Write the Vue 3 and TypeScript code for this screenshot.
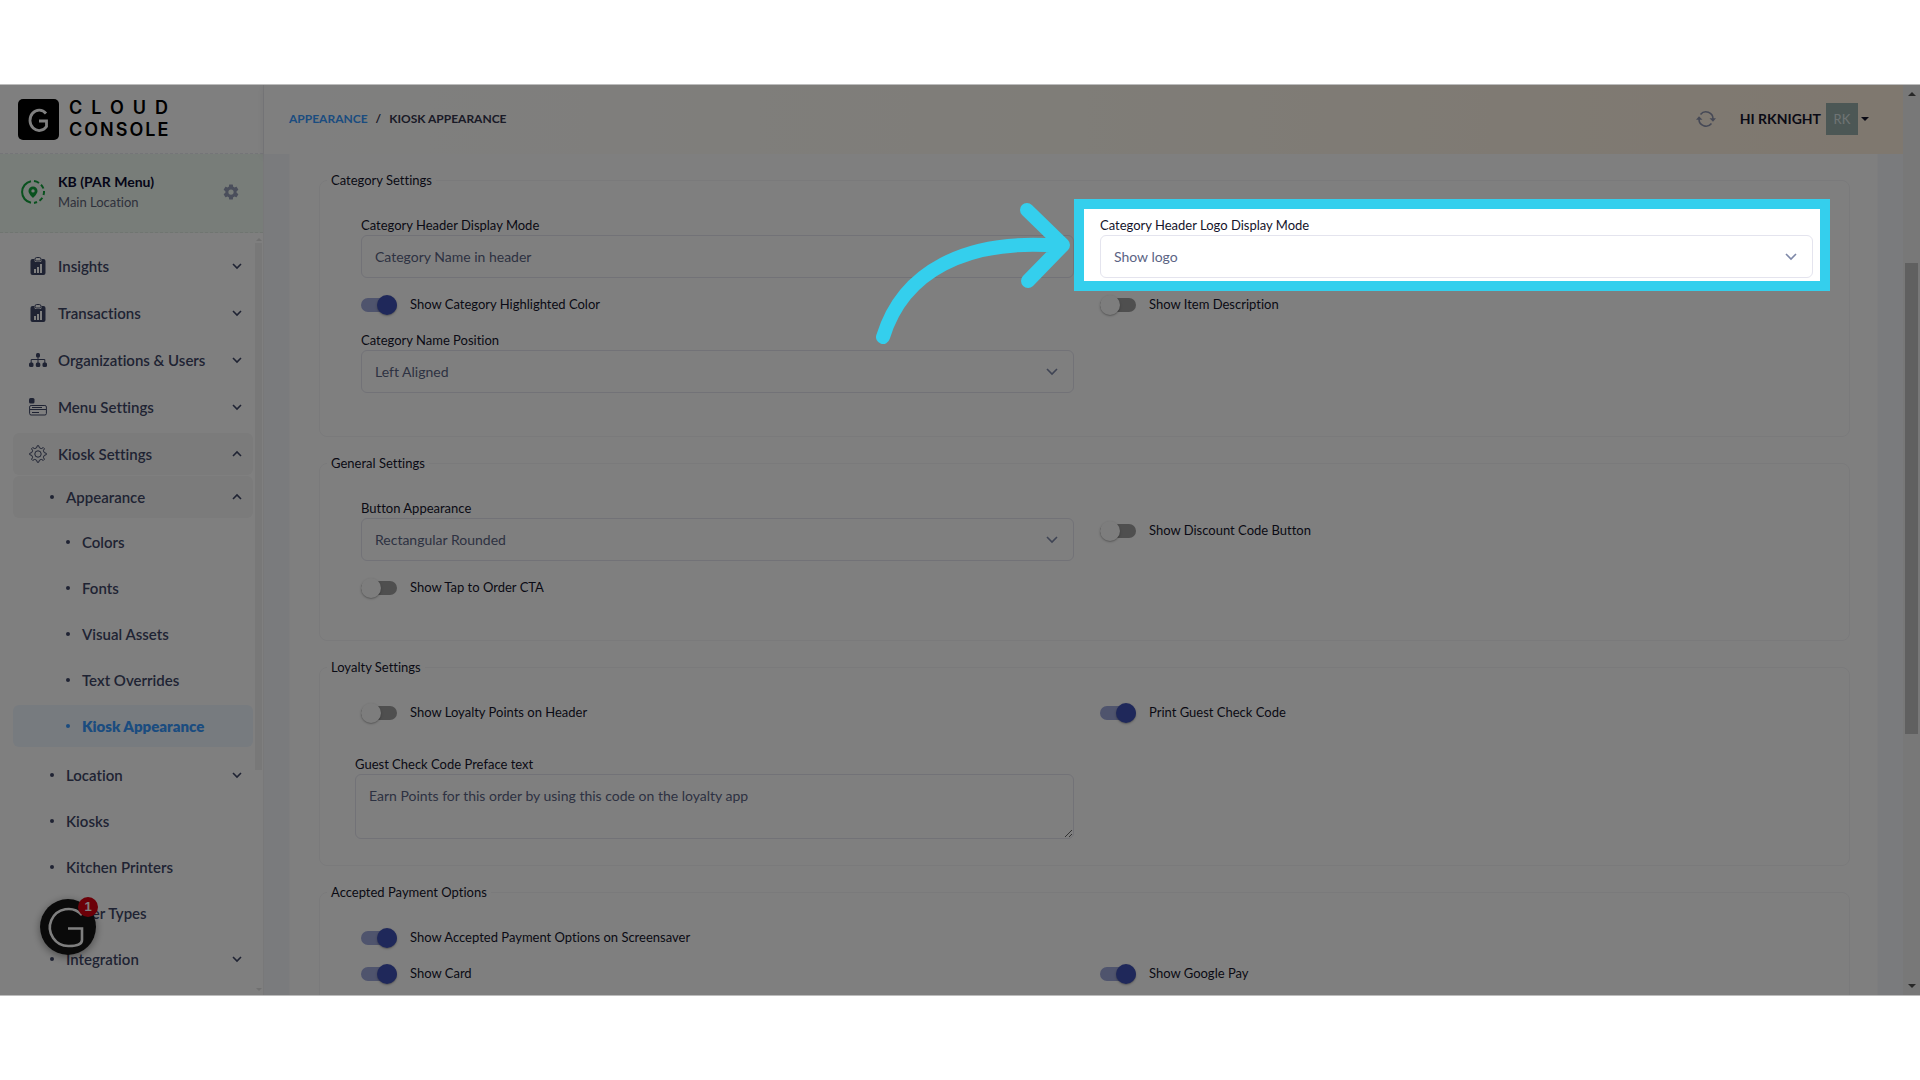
<script setup lang="ts">
import { ref } from 'vue'

interface NavItem {
  label: string
  icon?: string
  chevron?: 'up' | 'down'
  active?: boolean
  open?: boolean
  children?: NavItem[]
}

const nav: NavItem[] = [
  { label: 'Insights', icon: 'report', chevron: 'down' },
  { label: 'Transactions', icon: 'report', chevron: 'down' },
  { label: 'Organizations & Users', icon: 'org', chevron: 'down' },
  { label: 'Menu Settings', icon: 'menu', chevron: 'down' },
  {
    label: 'Kiosk Settings',
    icon: 'gear',
    chevron: 'up',
    open: true,
    children: [
      {
        label: 'Appearance',
        chevron: 'up',
        open: true,
        children: [
          { label: 'Colors' },
          { label: 'Fonts' },
          { label: 'Visual Assets' },
          { label: 'Text Overrides' },
          { label: 'Kiosk Appearance', active: true },
        ],
      },
      { label: 'Location', chevron: 'down' },
      { label: 'Kiosks' },
      { label: 'Kitchen Printers' },
      { label: 'Order Types' },
      { label: 'Integration', chevron: 'down' },
    ],
  },
]

const chevronPath = { down: 'M1 2l4 4 4-4', up: 'M1 6l4-4 4 4' }

const highlightedColor = ref(true)
const itemDescription = ref(false)
const discountCode = ref(false)
const tapToOrder = ref(false)
const loyaltyPoints = ref(false)
const guestCheckCode = ref(true)
const paymentScreensaver = ref(true)
const showCard = ref(true)
const googlePay = ref(true)
const preface = ref('Earn Points for this order by using this code on the loyalty app')
</script>

<template>
  <div class="stage">
    <div class="frame">
      <aside class="sidebar">
        <a class="brand" href="#">
          <svg class="brand-mark" viewBox="0 0 41 41" aria-hidden="true">
            <rect width="41" height="41" rx="5" fill="#000" />
            <path d="M28 14.500A9.200 10.200 0 1 0 28.500 27.500V22H21" fill="none" stroke="#fff" stroke-width="2.800" />
          </svg>
          <span class="brand-name">
            <span class="brand-cloud">CLOUD</span>
            <span class="brand-console">CONSOLE</span>
          </span>
        </a>

        <div class="place">
          <svg class="place-icon" viewBox="0 0 24 24" fill="none" stroke="#12a23c" stroke-width="2" aria-hidden="true">
            <path d="M10 1.200A11 11 0 0 0 10 22.800" />
            <path d="M13 1.100A11 11 0 0 1 18 3M20 4.800A11 11 0 0 1 22.400 8.500M23 11A11 11 0 0 1 22.500 15M21.300 17.800A11 11 0 0 1 18.500 20.800M16 22A11 11 0 0 1 13 22.900" />
            <path d="M12 6.500a4.500 4.500 0 0 0-4.500 4.500c0 3 4.500 7 4.500 7s4.500-4 4.500-7A4.500 4.500 0 0 0 12 6.500zm0 2.700a1.700 1.700 0 1 1 0 3.400 1.700 1.700 0 0 1 0-3.400z" fill="#12a23c" stroke="none" />
          </svg>
          <div class="place-text">
            <strong>KB (PAR Menu)</strong>
            <span>Main Location</span>
          </div>
          <button class="plain" type="button" aria-label="Location settings">
            <svg width="18" height="18" viewBox="0 0 24 24" fill="#959cb6" aria-hidden="true">
              <path d="M19.430 12.980c.04-.32.07-.64.07-.98s-.03-.66-.07-.98l2.110-1.650c.19-.15.24-.42.12-.64l-2-3.460c-.12-.22-.39-.3-.61-.22l-2.490 1c-.52-.4-1.080-.73-1.690-.98l-.38-2.650A.49.49 0 0 0 14 2h-4c-.25 0-.46.18-.49.42l-.38 2.650c-.61.25-1.170.59-1.690.98l-2.490-1c-.23-.09-.49 0-.61.22l-2 3.460c-.13.22-.07.49.12.64l2.110 1.650c-.04.32-.07.65-.07.98s.03.66.07.98l-2.110 1.650c-.19.15-.24.42-.12.64l2 3.460c.12.22.39.3.61.22l2.490-1c.52.4 1.080.73 1.690.98l.38 2.650c.03.24.24.42.49.42h4c.25 0 .46-.18.49-.42l.38-2.650c.61-.25 1.170-.59 1.690-.98l2.490 1c.23.09.49 0 .61-.22l2-3.460c.12-.22.07-.49-.12-.64zM12 15.500a3.500 3.500 0 1 1 0-7 3.500 3.500 0 0 1 0 7z" />
            </svg>
          </button>
        </div>

        <div class="nav-wrap">
          <nav class="nav" aria-label="Main">
            <ul class="level-1">
              <li v-for="top in nav" :key="top.label">
                <a href="#" class="item" :class="{ open: top.open }">
                  <svg v-if="top.icon === 'report'" class="icon" viewBox="0 0 18 18" aria-hidden="true">
                    <path d="M3.500 2h2v1.500A1.500 1.500 0 0 0 7 5h4a1.500 1.500 0 0 0 1.500-1.500V2h2A2 2 0 0 1 16.500 4v12a2 2 0 0 1-2 2h-11a2 2 0 0 1-2-2V4a2 2 0 0 1 2-2z" fill="#3f4767" />
                    <rect x="6" y="0.500" width="6" height="3.500" rx="1.700" fill="none" stroke="#3f4767" />
                    <path d="M5 12h2v4H5zM8 10h2v6H8zM11 7h2v9h-2z" fill="#fff" />
                  </svg>
                  <svg v-else-if="top.icon === 'org'" class="icon" viewBox="0 0 18 18" fill="#3f4767" aria-hidden="true">
                    <rect x="7" y="2" width="4" height="4.500" rx="1.500" />
                    <rect x="0" y="11.500" width="4.500" height="4.500" rx="1.500" />
                    <rect x="6.800" y="11.500" width="4.500" height="4.500" rx="1.500" />
                    <rect x="13.500" y="11.500" width="4.500" height="4.500" rx="1.500" />
                    <path d="M2.200 12V8.500h13.600V12M9 6v6" fill="none" stroke="#3f4767" />
                  </svg>
                  <svg v-else-if="top.icon === 'menu'" class="icon" viewBox="0 0 18 18" fill="none" stroke="#3f4767" aria-hidden="true">
                    <rect x="0" y="0" width="5.500" height="5.500" rx="1.500" fill="#3f4767" stroke="none" />
                    <rect x="0.600" y="7.500" width="16.800" height="9.500" rx="1.500" />
                    <path d="M1 11.500h16M3 9.500h10M3 14.500h7" />
                  </svg>
                  <svg v-else class="icon" viewBox="0 0 18 18" fill="none" stroke="#3f4767" stroke-linejoin="round" aria-hidden="true">
                    <circle cx="9" cy="9" r="3.200" />
                    <path d="M7.600 2.800L8.300.7h1.400l.7 2.100 1.900.8 2-1 1.100 1.100-1 2 .8 1.900 2.100.7v1.400l-2.100.7-.8 1.900 1 2-1.100 1.100-2-1-1.900.8-.7 2.100H8.300l-.7-2.100-1.900-.8-2 1-1.100-1.100 1-2-.8-1.900L.7 9.700V8.300l2.100-.7.8-1.900-1-2 1.100-1.100 2 1z" />
                  </svg>
                  <span class="label">{{ top.label }}</span>
                  <svg v-if="top.chevron" class="chev" viewBox="0 0 10 8" aria-hidden="true"><path :d="chevronPath[top.chevron]" /></svg>
                </a>
                <ul v-if="top.children" class="level-2">
                  <li v-for="mid in top.children" :key="mid.label">
                    <a href="#" class="item" :class="{ open: mid.open }">
                      <i class="dot"></i>
                      <span class="label">{{ mid.label }}</span>
                      <svg v-if="mid.chevron" class="chev" viewBox="0 0 10 8" aria-hidden="true"><path :d="chevronPath[mid.chevron]" /></svg>
                    </a>
                    <ul v-if="mid.children" class="level-3">
                      <li v-for="leaf in mid.children" :key="leaf.label">
                        <a href="#" class="item" :class="{ active: leaf.active }">
                          <i class="dot"></i>
                          <span class="label">{{ leaf.label }}</span>
                        </a>
                      </li>
                    </ul>
                  </li>
                </ul>
              </li>
            </ul>
          </nav>
          <div class="mini-scroll" aria-hidden="true">
            <i class="tri up"></i>
            <i class="mini-thumb"></i>
            <i class="mini-rest"></i>
            <i class="tri down"></i>
          </div>
        </div>
      </aside>

      <div class="main">
        <header class="topbar">
          <nav class="crumbs" aria-label="Breadcrumb">
            <a href="#">APPEARANCE</a>
            <span>/</span>
            <span>KIOSK APPEARANCE</span>
          </nav>
          <div class="account">
            <button class="plain" type="button" aria-label="Refresh">
              <svg width="20" height="18" viewBox="0 0 20 18" fill="none" stroke="#8d93ad" stroke-width="1.600" aria-hidden="true">
                <path d="M4.500 4.500A7 7 0 0 1 17 9M15.500 13.500A7 7 0 0 1 3 9" />
                <path d="M13.500 8.300H20L17 11.700zM0 9.700h6.500L3 6.300z" fill="#8d93ad" stroke="none" />
              </svg>
            </button>
            <button class="plain user" type="button">
              <span class="hello">HI RKNIGHT</span>
              <span class="avatar">RK</span>
              <i class="caret"></i>
            </button>
          </div>
        </header>

        <main class="content">
          <form class="card" @submit.prevent>
            <fieldset>
              <legend>Category Settings</legend>
              <div class="grid">
                <div class="field">
                  <label for="header-mode">Category Header Display Mode</label>
                  <div class="select">
                    <select id="header-mode"><option>Category Name in header</option></select>
                    <svg viewBox="0 0 12 8" aria-hidden="true"><path d="M1 1l5 5 5-5" /></svg>
                  </div>
                </div>
                <div class="field">
                  <label for="logo-mode">Category Header Logo Display Mode</label>
                  <div class="select">
                    <select id="logo-mode"><option>Show logo</option></select>
                    <svg viewBox="0 0 12 8" aria-hidden="true"><path d="M1 1l5 5 5-5" /></svg>
                  </div>
                  <div class="spotlight" aria-hidden="true"></div>
                  <svg class="arrow" viewBox="0 0 200 150" aria-hidden="true">
                    <path d="M13 137C33 72 95 38 190 46M157 10l36 35-35 36" />
                  </svg>
                </div>
                <label class="toggle"><input v-model="highlightedColor" type="checkbox" />Show Category Highlighted Color</label>
                <label class="toggle"><input v-model="itemDescription" type="checkbox" />Show Item Description</label>
                <div class="field">
                  <label for="name-position">Category Name Position</label>
                  <div class="select">
                    <select id="name-position"><option>Left Aligned</option></select>
                    <svg viewBox="0 0 12 8" aria-hidden="true"><path d="M1 1l5 5 5-5" /></svg>
                  </div>
                </div>
              </div>
            </fieldset>

            <fieldset>
              <legend>General Settings</legend>
              <div class="grid">
                <div class="field">
                  <label for="button-look">Button Appearance</label>
                  <div class="select">
                    <select id="button-look"><option>Rectangular Rounded</option></select>
                    <svg viewBox="0 0 12 8" aria-hidden="true"><path d="M1 1l5 5 5-5" /></svg>
                  </div>
                </div>
                <label class="toggle"><input v-model="discountCode" type="checkbox" />Show Discount Code Button</label>
                <label class="toggle"><input v-model="tapToOrder" type="checkbox" />Show Tap to Order CTA</label>
              </div>
            </fieldset>

            <fieldset class="loyalty">
              <legend>Loyalty Settings</legend>
              <div class="grid">
                <label class="toggle"><input v-model="loyaltyPoints" type="checkbox" />Show Loyalty Points on Header</label>
                <label class="toggle"><input v-model="guestCheckCode" type="checkbox" />Print Guest Check Code</label>
                <div class="field preface">
                  <label for="preface">Guest Check Code Preface text</label>
                  <textarea id="preface" v-model="preface"></textarea>
                </div>
              </div>
            </fieldset>

            <fieldset>
              <legend>Accepted Payment Options</legend>
              <div class="grid">
                <label class="toggle full"><input v-model="paymentScreensaver" type="checkbox" />Show Accepted Payment Options on Screensaver</label>
                <label class="toggle"><input v-model="showCard" type="checkbox" />Show Card</label>
                <label class="toggle"><input v-model="googlePay" type="checkbox" />Show Google Pay</label>
              </div>
            </fieldset>
          </form>
        </main>
      </div>

      <div class="scrollbar" aria-hidden="true">
        <i class="tri up"></i>
        <i class="before"></i>
        <i class="thumb"></i>
        <i class="after"></i>
        <i class="tri down"></i>
      </div>

      <button class="plain helper" type="button" aria-label="Open help, 1 unread">
        <svg viewBox="0 0 56 56" aria-hidden="true">
          <circle cx="28" cy="28" r="28" fill="#141414" />
          <path d="M42 16A18.500 18.500 0 1 0 29 47C36 47 42 46 42 41V29.500H28" fill="none" stroke="#fff" stroke-width="2.600" />
        </svg>
        <span class="badge">1</span>
      </button>
    </div>
  </div>
</template>

<style>
body {
  margin: 0;
  background: #fff;
}
</style>

<style scoped>
* {
  box-sizing: border-box;
}
.stage {
  display: flex;
  height: 100vh;
  padding: 84px 0;
  font-family: Lato, "Liberation Sans", sans-serif;
  font-size: 13px;
  font-variant-ligatures: none;
  line-height: 20px;
  color: #14142b;
}
.frame {
  position: relative;
  flex: 1;
  display: flex;
  overflow: hidden;
  border-top: 1px solid #bdbdbd;
  border-bottom: 1px solid #bdbdbd;
}
ul {
  list-style: none;
  margin: 0;
  padding: 0;
}
a {
  color: inherit;
  text-decoration: none;
}
.plain {
  border: 0;
  padding: 0;
  background: none;
  font: inherit;
  color: inherit;
  display: flex;
  align-items: center;
}

/* Sidebar */
.sidebar {
  flex: none;
  width: 264px;
  display: flex;
  flex-direction: column;
  border-right: 1px solid #f0f0f3;
  background: #fff;
}
.brand {
  display: flex;
  align-items: center;
  gap: 10px;
  height: 69px;
  padding: 0 18px;
  border-bottom: 1px dashed #ebebf0;
  color: #000;
}
.brand-mark {
  width: 41px;
  height: 41px;
}
.brand-name {
  display: flex;
  flex-direction: column;
  font-family: Inter, "Liberation Sans", sans-serif;
  font-size: 18px;
  font-weight: 600;
  line-height: 22px;
}
.brand-cloud {
  letter-spacing: 9px;
}
.brand-console {
  letter-spacing: 2px;
}
.place {
  display: flex;
  align-items: center;
  height: 79px;
  padding: 0 23px 2px 21px;
  border-bottom: 1px dashed #e0eae2;
  background: #f0faf2;
}
.place-icon {
  width: 24px;
  height: 24px;
}
.place-text {
  flex: 1;
  display: flex;
  flex-direction: column;
  margin-left: 13px;
  font-size: 13px;
  color: #5e6278;
}
.place-text strong {
  font-size: 14px;
  color: #0b0b30;
}
.nav-wrap {
  flex: 1;
  min-height: 0;
  display: flex;
}
.nav {
  flex: 1;
  padding: 12px 2px 0 13px;
}
.level-1 {
  display: flex;
  flex-direction: column;
  gap: 5px;
}
.level-2,
.level-3 {
  display: flex;
  flex-direction: column;
  gap: 4px;
}
.level-2 {
  padding-top: 1px;
}
.level-3 {
  padding: 3px 0;
}
.item {
  display: flex;
  align-items: center;
  height: 42px;
  padding: 0 11px 0 16px;
  border-radius: 6px;
  font-size: 15px;
  font-weight: 600;
  color: #3f4767;
}
.item.open {
  background: #f7f7f7;
}
.item.active {
  background: #eff6ff;
  color: #3699ff;
  font-weight: 800;
}
.icon {
  width: 18px;
  height: 18px;
  margin-right: 11px;
}
.label {
  flex: 1;
}
.dot {
  width: 4px;
  height: 4px;
  margin-right: 12px;
  border-radius: 50%;
  background: currentColor;
}
.level-2 .item {
  padding-left: 37px;
}
.level-3 .item {
  padding-left: 53px;
}
.chev {
  width: 10px;
  height: 8px;
  fill: none;
  stroke: #3f4767;
  stroke-width: 1.6;
}
.mini-scroll {
  width: 7px;
  margin-right: 1px;
  display: flex;
  flex-direction: column;
  align-items: center;
  padding: 5px 0 4px;
}
.mini-thumb {
  flex: 526;
  width: 7px;
  margin-top: 2px;
  background: #f0f0f0;
}
.mini-rest {
  flex: 218;
}
.tri {
  border: 3px solid transparent;
}
.tri.up {
  border-top: 0;
  border-bottom-color: #e0e0e0;
}
.tri.down {
  border-bottom: 0;
  border-top-color: #e0e0e0;
}

/* Top bar */
.main {
  flex: 1;
  min-width: 0;
  display: flex;
  flex-direction: column;
}
.topbar {
  flex: none;
  display: flex;
  justify-content: space-between;
  align-items: center;
  height: 69px;
  padding: 0 34px 2px 25px;
  background: linear-gradient(90deg, #fff, #fffaf0 50%, #fff0de);
  box-shadow: 0 2px 8px rgba(60, 60, 90, 0.1);
}
.crumbs {
  display: flex;
  gap: 8px;
  font-size: 12px;
  font-weight: 700;
  color: #34364e;
}
.crumbs a {
  color: #3699ff;
}
.account {
  display: flex;
  align-items: center;
  gap: 24px;
}
.hello {
  font-size: 14px;
  font-weight: 700;
  color: #14142b;
}
.avatar {
  width: 32px;
  height: 32px;
  margin: 0 3px 0 5px;
  background: #98aeaa;
  font-size: 13px;
  line-height: 32px;
  text-align: center;
  color: #dfe8e8;
}
.caret {
  border: 4px solid transparent;
  border-top-color: #14142b;
  border-bottom: 0;
}

/* Settings form */
.content {
  flex: 1;
  min-height: 0;
  padding: 0 25px;
  background: #f5f6fb;
}
.card {
  min-height: 100%;
  padding: 16px 27px 0 29px;
  border: 1px solid #fafafc;
  border-width: 0 1px;
  background: #fff;
}
fieldset {
  min-width: 0;
  margin: 0 0 16px;
  padding: 25px 36px 43px 7px;
  border: 1px solid #f5f5f7;
  border-radius: 8px;
}
.loyalty {
  padding-bottom: 26px;
}
legend {
  padding: 0 4px;
}
.grid {
  display: grid;
  grid-template-columns: repeat(2, minmax(0, 1fr));
  gap: 16px 26px;
  align-items: center;
  padding-left: 34px;
}
.field {
  position: relative;
  display: flex;
  flex-direction: column;
}
.preface {
  margin: 16px 0 0 -6px;
}
.select {
  position: relative;
}
select,
textarea {
  display: block;
  width: 100%;
  border: 1px solid #e4e4ee;
  border-radius: 6px;
  background: #fff;
  font: inherit;
  font-size: 14px;
  color: #5b6484;
  outline: 0;
}
select {
  height: 43px;
  padding: 1px 40px 0 13px;
  appearance: none;
}
.select svg {
  position: absolute;
  top: 18px;
  right: 16px;
  width: 12px;
  height: 8px;
  fill: none;
  stroke: #7e88a8;
  stroke-width: 1.6;
  pointer-events: none;
}
textarea {
  height: 65px;
  padding: 11px 13px;
}
.toggle {
  display: flex;
  align-items: center;
  gap: 13px;
}
.full {
  grid-column: 1 / -1;
}
.toggle input {
  appearance: none;
  position: relative;
  flex: none;
  width: 36px;
  height: 14px;
  margin: 2px 0 0;
  background: #9e9e9e;
  border-radius: 7px;
}
.toggle input::before {
  content: "";
  position: absolute;
  top: -3px;
  left: 0;
  width: 20px;
  height: 20px;
  border-radius: 50%;
  background: #fafafa;
  box-shadow: 0 1px 3px rgba(0, 0, 0, 0.2), 0 1px 1px rgba(0, 0, 0, 0.15);
}
.toggle input:checked {
  background: #9fa8da;
}
.toggle input:checked::before {
  left: 16px;
  background: #3f51b5;
}

/* Guided-tour spotlight: its shadow dims everything around the field */
.spotlight {
  position: absolute;
  z-index: 10;
  inset: -16px -17px -13px -26px;
  border: 10px solid #34cfed;
  box-shadow: 0 0 0 3000px rgba(0, 0, 0, 0.5);
  pointer-events: none;
}
.arrow {
  position: absolute;
  z-index: 11;
  top: -15px;
  right: calc(100% + 30px);
  width: 200px;
  height: 150px;
  fill: none;
  stroke: #34cfed;
  stroke-width: 14;
  stroke-linecap: round;
  stroke-linejoin: round;
}

/* Page scrollbar */
.scrollbar {
  flex: none;
  width: 17px;
  display: flex;
  flex-direction: column;
  align-items: center;
  padding: 7px 0;
  background: #f1f1f1;
}
.scrollbar .tri {
  border-width: 4px;
}
.scrollbar .up {
  border-top: 0;
  border-bottom-color: #505050;
}
.scrollbar .down {
  border-bottom: 0;
  border-top-color: #505050;
}
.before {
  flex: 167;
}
.thumb {
  flex: 471;
  width: 13px;
  background: #c1c1c1;
}
.after {
  flex: 250;
}

/* Floating help launcher */
.helper {
  position: absolute;
  left: 40px;
  bottom: 40px;
  width: 56px;
  height: 56px;
  border-radius: 50%;
  box-shadow: 0 2px 8px rgba(0, 0, 0, 0.4);
}
.helper svg {
  width: 56px;
  height: 56px;
}
.badge {
  position: absolute;
  top: -2px;
  right: -2px;
  width: 20px;
  height: 20px;
  border-radius: 50%;
  background: #d80010;
  font-family: "Liberation Sans", sans-serif;
  font-size: 13px;
  font-weight: 700;
  color: #fff;
  text-align: center;
}
</style>
